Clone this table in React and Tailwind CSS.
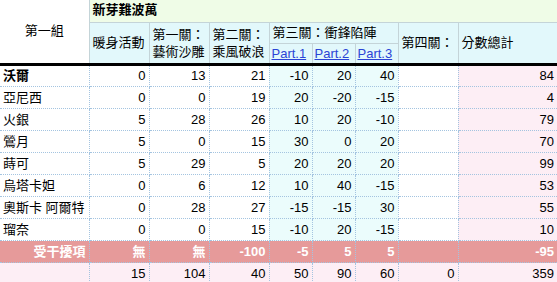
import React from "react";

const rows = [
  ["沃爾", 0, 13, 21, -10, 20, 40, "", 84, true],
  ["亞尼西", 0, 0, 19, 20, -20, -15, "", 4],
  ["火銀", 5, 28, 26, 10, 20, -10, "", 79],
  ["鶯月", 5, 0, 15, 30, 0, 20, "", 70],
  ["蒔可", 5, 29, 5, 20, 20, 20, "", 99],
  ["烏塔卡妲", 0, 6, 12, 10, 40, -15, "", 53],
  ["奧斯卡 阿爾特", 0, 28, 27, -15, -15, 30, "", 55],
  ["瑠奈", 0, 0, 15, -10, 20, -15, "", 10],
];

const bgFor = (i) =>
  i >= 4 && i <= 6 ? "bg-[#ebfcfc]" : i === 8 ? "bg-[#fdeef5]" : "bg-white";

const dot = "border border-dotted border-[#a4c4e0]";
const solid = "border border-solid border-[#c4d4d8]";

export default function App() {
  return (
    <div
      className="w-[557px] h-[282px] overflow-hidden bg-white text-[13px] text-black"
      style={{ fontFamily: '"Liberation Sans", "Noto Sans CJK TC", sans-serif' }}
    >
      <table className="table-fixed border-collapse w-[557px] -mt-px">
        <colgroup>
          <col className="w-[89px]" />
          <col className="w-[60px]" />
          <col className="w-[60px]" />
          <col className="w-[60px]" />
          <col className="w-[43px]" />
          <col className="w-[43px]" />
          <col className="w-[43px]" />
          <col className="w-[60px]" />
          <col className="w-[99px]" />
        </colgroup>
        <thead>
          <tr className="h-[23px]">
            <th rowSpan={3} className={`${solid} border-l-0 border-t-0 bg-white font-normal text-center align-middle border-b-[3px] border-b-black`}>
              第一組
            </th>
            <th colSpan={8} className={`${solid} border-t-0 border-r-0 bg-[#effce7] text-left font-bold px-[3px] leading-[16px] align-middle`}>
              新芽難波萬
            </th>
          </tr>
          <tr className="h-[21px]">
            <th rowSpan={2} className={`${solid} bg-[#e2f8fb] font-normal text-left px-[3px] align-middle border-b-[3px] border-b-black`}>
              暖身活動
            </th>
            <th rowSpan={2} className={`${solid} bg-[#e2f8fb] font-normal text-left px-[3px] align-middle leading-[17px] border-b-[3px] border-b-black`}>
              第一關：<br />藝術沙雕
            </th>
            <th rowSpan={2} className={`${solid} bg-[#e2f8fb] font-normal text-left px-[3px] align-middle leading-[17px] border-b-[3px] border-b-black`}>
              第二關：<br />乘風破浪
            </th>
            <th colSpan={3} className={`${solid} bg-[#e2f8fb] font-normal text-left px-[3px] align-middle whitespace-nowrap`}>
              第三關：衝鋒陷陣
            </th>
            <th rowSpan={2} className={`${solid} bg-[#e2f8fb] font-normal text-left px-[3px] align-middle border-b-[3px] border-b-black whitespace-nowrap`}>
              第四關：
            </th>
            <th rowSpan={2} className={`${solid} border-r-0 bg-[#e2f8fb] font-normal text-left px-[3px] align-middle border-b-[3px] border-b-black`}>
              分數總計
            </th>
          </tr>
          <tr className="h-[21px]">
            {["Part.1", "Part.2", "Part.3"].map((p) => (
              <th key={p} className={`${solid} bg-[#e2f8fb] font-normal text-left px-[2px] align-middle border-b-[3px] border-b-black`}>
                <span className="underline text-[#2b44d6]">{p}</span>
              </th>
            ))}
          </tr>
        </thead>
        <tbody>
          {rows.map((r) => (
            <tr key={r[0]} className="h-[22px]">
              <td className={`${dot} border-l-0 bg-white px-[3px] whitespace-nowrap ${r[9] ? "font-bold" : ""}`}>
                {r[0]}
              </td>
              {r.slice(1, 9).map((v, i) => (
                <td key={i} className={`${dot} ${i === 7 ? "border-r-0" : ""} ${bgFor(i + 1)} text-right px-[3px]`}>
                  {v}
                </td>
              ))}
            </tr>
          ))}
          <tr className="h-[22px] bg-[#e69a9a] text-white font-bold">
            <td className={`${dot} border-l-0 text-right px-[3px]`}>受干擾項</td>
            {["無", "無", -100, -5, 5, 5, "", -95].map((v, i) => (
              <td key={i} className={`${dot} ${i === 7 ? "border-r-0" : ""} text-right px-[3px]`}>
                {v}
              </td>
            ))}
          </tr>
          <tr className="h-[22px] bg-[#fdeef5]">
            <td className={`${dot} border-l-0 border-b-0 px-[3px]`}></td>
            {[15, 104, 40, 50, 90, 60, 0, 359].map((v, i) => (
              <td key={i} className={`${dot} border-b-0 ${i === 7 ? "border-r-0" : ""} text-right px-[3px]`}>
                {v}
              </td>
            ))}
          </tr>
        </tbody>
      </table>
    </div>
  );
}
